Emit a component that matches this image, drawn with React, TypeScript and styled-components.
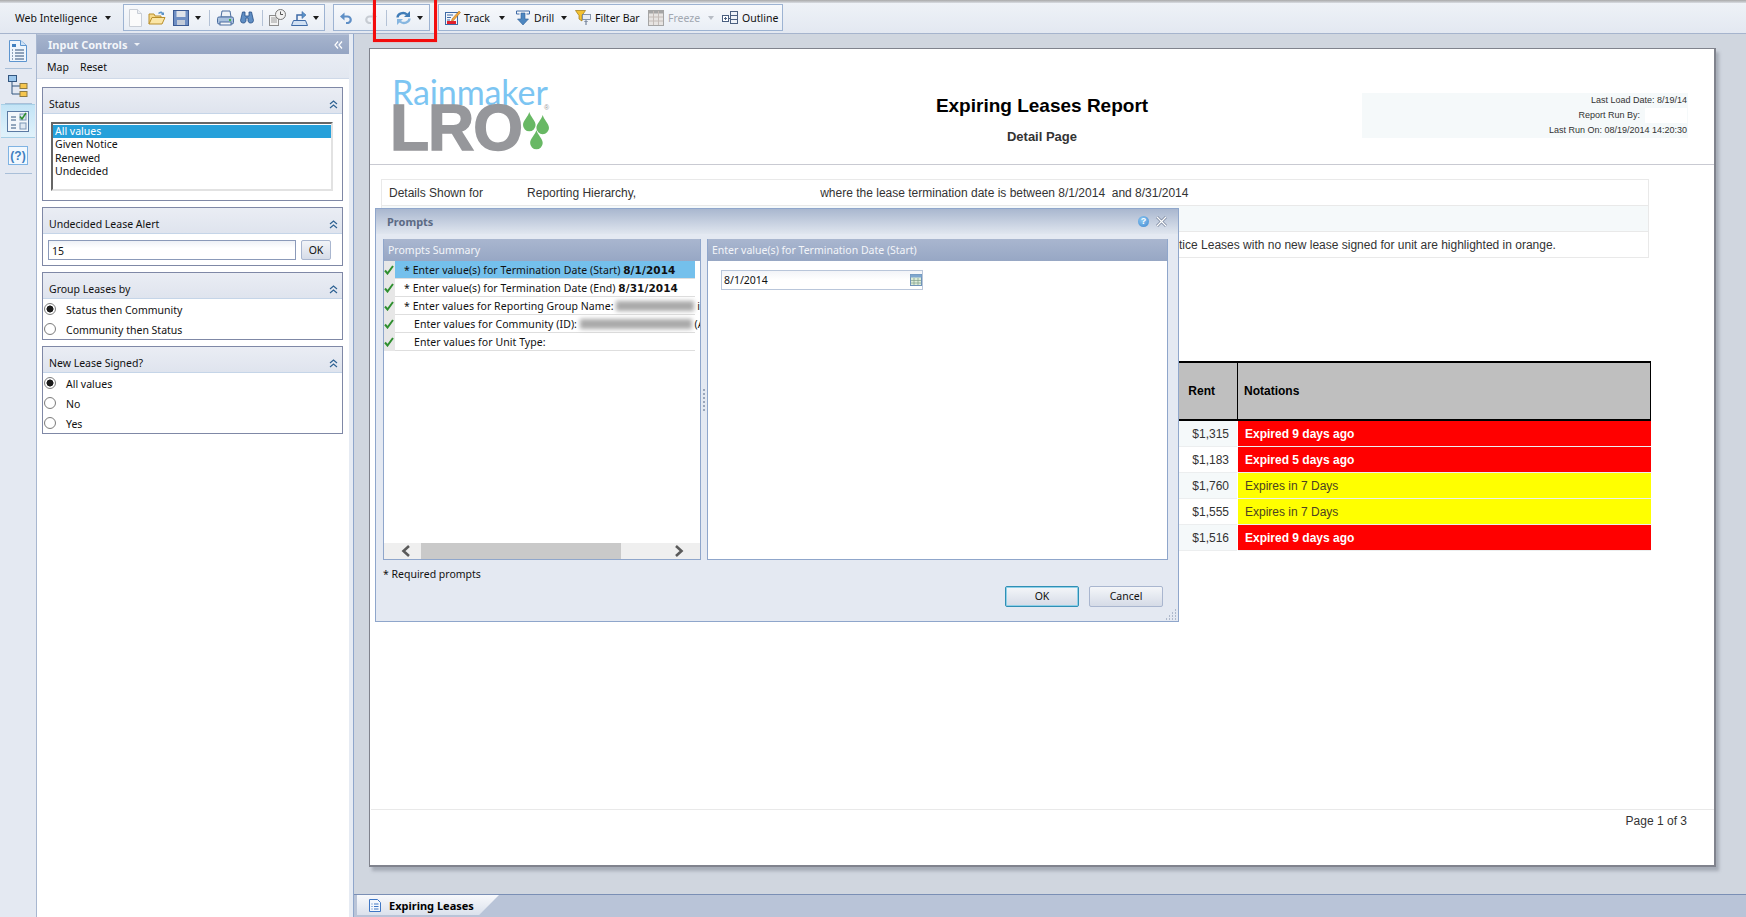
import React from 'react';
import styled, { createGlobalStyle } from 'styled-components';

const UI_FONT = `"Noto Sans", "DejaVu Sans", sans-serif`;
const REPORT_FONT = `"Liberation Sans", Arial, sans-serif`;

const GlobalStyle = createGlobalStyle`
  html, body { margin: 0; padding: 0; background: #fff; }
  * { box-sizing: border-box; }
`;

/* ---------- icons ---------- */

const DocIcon = () => (
  <svg width="15" height="18" viewBox="0 0 15 18">
    <path d="M1.500 .5h8l4 4v13h-12z" fill="#fbfbfb" stroke="#c9ced6" />
    <path d="M9.500 .5v4h4" fill="#eceff3" stroke="#c9ced6" />
  </svg>
);
const FolderIcon = () => (
  <svg width="18" height="16" viewBox="0 0 18 16">
    <path d="M1 14V4h5l1 2h6v2" fill="#f6d98a" stroke="#b98f2c" />
    <path d="M1 14l3-6.500h13L14 14z" fill="#fbe6a6" stroke="#b98f2c" />
    <path d="M10 3c2-2 4-2 5 0l1-1v3h-3l1-1c-1-1-2-1-3 0z" fill="#5b93c9" />
  </svg>
);
const SaveIcon = () => (
  <svg width="16" height="16" viewBox="0 0 16 16">
    <rect x=".5" y=".5" width="15" height="15" fill="#6f8fc4" stroke="#3b5a94" />
    <rect x="3.500" y="1" width="9" height="6" fill="#dfe3ea" />
    <rect x="4" y="10" width="8" height="5" fill="#c4ccd9" />
  </svg>
);
const PrintIcon = () => (
  <svg width="17" height="16" viewBox="0 0 17 16">
    <path d="M5 1h8l1 6H4z" fill="#eef2f7" stroke="#4a6d9f" />
    <rect x=".5" y="7" width="16" height="7" rx="1.500" fill="#a9c1de" stroke="#4a6d9f" />
    <rect x="3" y="12" width="11" height="3" fill="#f4f6f9" stroke="#4a6d9f" />
    <rect x="12" y="9" width="2" height="2" fill="#43b649" />
  </svg>
);
const BinocularIcon = () => (
  <svg width="14" height="13" viewBox="0 0 14 13">
    <path d="M2.500 1h2.500v4h4V1h2.500l2 8.500a2.800 2.800 0 0 1-5.500 .5V7H6v3a2.800 2.800 0 0 1-5.500 -.5z" fill="#5f8ec4" stroke="#274f86" strokeWidth=".8" />
  </svg>
);
const ScheduleIcon = () => (
  <svg width="17" height="17" viewBox="0 0 17 17">
    <rect x=".5" y="6.500" width="9" height="10" fill="#f3f3f3" stroke="#8c8c8c" />
    <path d="M2 9h6M2 11h6M2 13h6" stroke="#9c9c9c" />
    <circle cx="11.500" cy="5.500" r="5" fill="#f1f1f1" stroke="#777" />
    <path d="M11.500 2.500v3h2.500" fill="none" stroke="#555" />
  </svg>
);
const ExportIcon = () => (
  <svg width="17" height="16" viewBox="0 0 17 16">
    <path d="M.5 15.500l2-5h12l2 5z" fill="#d2e1f3" stroke="#3e6aa6" />
    <path d="M6 10V5h6" fill="none" stroke="#3e6aa6" strokeWidth="1.500" />
    <path d="M11 1.500l4 3.500-4 3.500z" fill="#5b93c9" stroke="#3e6aa6" strokeWidth=".6" />
  </svg>
);
const UndoIcon = ({ $off }: { $off?: boolean }) => (
  <svg width="13" height="12" viewBox="0 0 13 12" style={{ transform: $off ? 'scaleX(-1)' : undefined }}>
    <path d="M3 4.500h4.500a3 3 0 0 1 0 6.500H6" fill="none" stroke={$off ? '#c7ccd3' : '#5f8fc6'} strokeWidth="2.200" />
    <path d="M4.500 .5v8L0 4.500z" fill={$off ? '#c7ccd3' : '#5f8fc6'} />
  </svg>
);
const RefreshIcon = () => (
  <svg width="15" height="14" viewBox="0 0 15 14">
    <path d="M1.500 6.500a5.500 4.500 0 0 1 9.500-3" fill="none" stroke="#3f7cb8" strokeWidth="2.300" />
    <path d="M13.500 7.500a5.500 4.500 0 0 1-9.500 3" fill="none" stroke="#86b6e0" strokeWidth="2.300" />
    <path d="M14 0v6H8z" fill="#3f7cb8" />
    <path d="M1 14V8h6z" fill="#86b6e0" />
  </svg>
);
const TrackIcon = () => (
  <svg width="16" height="15" viewBox="0 0 16 15">
    <rect x=".5" y="2.500" width="12" height="12" fill="#f3f6fb" stroke="#3e6aa6" />
    <path d="M2 5h6M2 7.500h4M2 10h3" stroke="#3e6aa6" />
    <rect x="2" y="11" width="9" height="3" fill="#e2202c" />
    <path d="M7 9l7-8 1.500 1.500-7 8-2 .5z" fill="#f1a73c" stroke="#a5651a" strokeWidth=".5" />
  </svg>
);
const DrillIcon = () => (
  <svg width="14" height="16" viewBox="0 0 14 16">
    <path d="M.5 1h13M.5 1v3M13.500 1v3M.5 4h3M10.500 4h3" fill="none" stroke="#3e6aa6" />
    <path d="M5 3h4v6h3.500L7 15 1.500 9H5z" fill="#4c86c0" stroke="#2f5f99" strokeWidth=".6" />
  </svg>
);
const FilterIcon = () => (
  <svg width="16" height="15" viewBox="0 0 16 15">
    <path d="M.5 .5h10L7 5.500V11L4 9V5.500z" fill="#f3c232" stroke="#a8821a" strokeWidth=".8" />
    <rect x="7.500" y="4.500" width="8" height="5" fill="#e8edf4" stroke="#6d7f98" strokeWidth=".8" />
    <path d="M11 15v-4M9.500 12l1.500-1.500 1.500 1.500" fill="none" stroke="#5d6f88" />
  </svg>
);
const FreezeIcon = () => (
  <svg width="16" height="16" viewBox="0 0 16 16">
    <rect x=".5" y=".5" width="15" height="15" fill="#e7e4e2" stroke="#a5a5a5" />
    <rect x=".5" y=".5" width="15" height="3" fill="#a5a5a5" />
    <path d="M5.500 1v14M10.500 1v14M1 7h14M1 11h14" stroke="#c4bcb8" />
  </svg>
);
const OutlineIcon = () => (
  <svg width="16" height="13" viewBox="0 0 16 13">
    <rect x=".5" y="4.500" width="6" height="6" fill="#fff" stroke="#4a5f80" />
    <path d="M3.500 6v3M2 7.500h3" stroke="#4a5f80" />
    <rect x="8.500" y=".5" width="7" height="12" fill="#eef2f8" stroke="#4a5f80" />
    <path d="M8.500 4.500h7M8.500 8.500h7M6.500 7.500h2" stroke="#4a5f80" />
  </svg>
);
const CollapseIcon = () => (
  <svg width="9" height="9" viewBox="0 0 9 9">
    <path d="M1 4l3.500-3L8 4M1 8l3.500-3L8 8" fill="none" stroke="#2e6293" strokeWidth="1.200" />
  </svg>
);
const DoubleLeftIcon = () => (
  <svg width="9" height="8" viewBox="0 0 9 8">
    <path d="M4 .5L1 4l3 3.500M8 .5L5 4l3 3.500" fill="none" stroke="#fff" strokeWidth="1.200" />
  </svg>
);
const CheckIcon = () => (
  <svg width="10" height="10" viewBox="0 0 10 10">
    <path d="M1 5.500l2.500 3L9 1" fill="none" stroke="#2f8f2f" strokeWidth="2" />
  </svg>
);
const CloseIcon = () => (
  <svg width="11" height="11" viewBox="0 0 11 11">
    <path d="M1 1l9 9M10 1l-9 9" stroke="#76839b" strokeWidth="2.800" />
    <path d="M1 1l9 9M10 1l-9 9" stroke="#fff" strokeWidth="1.300" />
  </svg>
);
const ScrollChevron = ({ $dir }: { $dir: 'left' | 'right' }) => (
  <svg width="10" height="12" viewBox="0 0 10 12">
    <path d={$dir === 'left' ? 'M8 1L2.500 6 8 11' : 'M2 1l5.500 5L2 11'} fill="none" stroke="#5a5a5a" strokeWidth="2.600" />
  </svg>
);
const ReportRailIcon = () => (
  <svg width="18" height="22" viewBox="0 0 18 22">
    <path d="M.5 .5h11l6 5v16H.5z" fill="#eef5fc" stroke="#5d95cf" />
    <path d="M11.500 .5v5h6" fill="#cfe2f5" stroke="#5d95cf" />
    <path d="M3 4h4v3H3z" fill="#3f7fbf" />
    <path d="M3 10h1M6 10h9M3 13h1M6 13h9M3 16h1M6 16h9M3 19h1M6 19h9" stroke="#2f4f77" />
  </svg>
);
const TreeRailIcon = () => (
  <svg width="20" height="22" viewBox="0 0 20 22">
    <rect x=".5" y=".5" width="8" height="6" fill="#9cc7ec" stroke="#33567f" />
    <path d="M4 7v12h8M4 11h8" fill="none" stroke="#33567f" />
    <rect x="12" y="8.500" width="7" height="5" fill="#f6c64e" stroke="#8d7b45" />
    <rect x="12" y="16.500" width="7" height="5" fill="#f6c64e" stroke="#8d7b45" />
  </svg>
);
const ControlsRailIcon = () => (
  <svg width="22" height="21" viewBox="0 0 22 21">
    <rect x=".5" y=".5" width="21" height="20" fill="#f3f7fb" stroke="#5b7aa3" />
    <path d="M4 6h5M4 9h5M4 14h5M4 17h5" stroke="#33567f" />
    <rect x="13" y="3" width="6" height="6" fill="#dfe8f2" stroke="#7b95b5" />
    <path d="M13 5.500l2 2.500 4-6" fill="none" stroke="#2f8f2f" strokeWidth="1.600" />
    <rect x="13" y="12" width="6" height="6" fill="#dfe8f2" stroke="#7b95b5" />
  </svg>
);
const HelpRailIcon = () => (
  <svg width="20" height="19" viewBox="0 0 20 19">
    <rect x=".5" y=".5" width="19" height="18" fill="#f2f8fe" stroke="#7fb3e3" />
    <text x="10" y="14" textAnchor="middle" fontSize="12" fontFamily={REPORT_FONT} fontWeight="700" fill="#3f7fbf">(?)</text>
  </svg>
);
const SheetTabIcon = () => (
  <svg width="12" height="13" viewBox="0 0 12 13">
    <path d="M.5 .5h8l3 3v9H.5z" fill="#f4f8fd" stroke="#3f76c4" />
    <path d="M2.500 5h1M5 5h4.500M2.500 7.500h1M5 7.500h4.500M2.500 10h1M5 10h4.500" stroke="#3f76c4" />
  </svg>
);
const CalendarIcon = () => (
  <svg width="12" height="12" viewBox="0 0 12 12">
    <rect x=".5" y=".5" width="11" height="11" fill="#dcebd8" stroke="#6f93b8" />
    <rect x=".5" y=".5" width="11" height="3" fill="#7fa7cf" />
    <path d="M4 4v7M8 4v7M1 6.500h10M1 9h10" stroke="#7f9d8a" strokeWidth=".7" />
  </svg>
);
const Drop = ({ $x, $y }: { $x: number; $y: number }) => (
  <path transform={`translate(${$x} ${$y})`} d="M7.500 0C9 6 15 10 15 15.500a7.500 7.500 0 0 1-15 0C0 10 6 6 7.500 0z" fill="#68b864" />
);

/* ---------- page shell ---------- */

const Page = styled.div`
  position: relative;
  width: 1746px;
  height: 917px;
  overflow: hidden;
  display: flex;
  flex-direction: column;
  font-family: ${UI_FONT};
  font-size: 10.5px;
  color: #111;
  background: #e4e9f2;
`;

const TopEdge = styled.div`
  height: 3px;
  background: linear-gradient(#a9a9a9, #d8dce2);
`;

const Toolbar = styled.div`
  height: 31px;
  display: flex;
  align-items: flex-start;
  padding-top: 1px;
  background: linear-gradient(#eef2f7, #e3e8f1);
  border-bottom: 1px solid #a6b4cd;
`;

const AppMenu = styled.div`
  width: 123px;
  height: 27px;
  display: flex;
  align-items: center;
  padding-left: 15px;
  gap: 8px;
`;

const ToolGroup = styled.div<{ $width: number; $gap?: number }>`
  width: ${(p) => p.$width}px;
  height: 27px;
  margin-right: ${(p) => p.$gap ?? 0}px;
  display: flex;
  align-items: center;
  border: 1px solid #9db3d2;
  background: linear-gradient(#f7f9fc, #e9eef5);
`;

const Slot = styled.div<{ $width: number }>`
  width: ${(p) => p.$width}px;
  flex: none;
  display: flex;
  align-items: center;
  justify-content: center;
`;

const ToolLabel = styled.span<{ $off?: boolean; $width: number; $lead?: number }>`
  width: ${(p) => p.$width}px;
  flex: none;
  margin-left: ${(p) => p.$lead ?? 4}px;
  white-space: nowrap;
  color: ${(p) => (p.$off ? '#a2a8b1' : '#111')};
`;

const Caret = styled.i<{ $off?: boolean }>`
  display: block;
  width: 0;
  height: 0;
  border-left: 3.5px solid transparent;
  border-right: 3.5px solid transparent;
  border-top: 4px solid ${(p) => (p.$off ? '#b8bdc5' : '#1c1c1c')};
`;

const ToolSep = styled.i`
  display: block;
  width: 1px;
  height: 16px;
  background: #b4c2d6;
`;

const RedMark = styled.div`
  position: absolute;
  left: 373px;
  top: 0;
  width: 64px;
  height: 42px;
  border: 3px solid #f30c0c;
  border-top: none;
  box-shadow: 0 0 1px #f77;
`;

const Main = styled.div`
  flex: 1;
  min-height: 0;
  display: flex;
`;

/* ---------- left rail ---------- */

const Rail = styled.nav`
  width: 37px;
  flex: none;
  display: flex;
  flex-direction: column;
  align-items: center;
  padding-top: 4px;
  background: #e4e9f2;
  border-right: 1px solid #a8b7d0;
`;

const RailItem = styled.div<{ $active?: boolean; $height: number; $top?: number }>`
  width: 34px;
  height: ${(p) => p.$height}px;
  margin-top: ${(p) => p.$top ?? 0}px;
  flex: none;
  display: flex;
  align-items: center;
  justify-content: center;
  background: ${(p) => (p.$active ? 'linear-gradient(#c3e4f6, #e1f2fb)' : 'transparent')};
  border-top: ${(p) => (p.$active ? '1px solid #a6cfe6' : 'none')};
  border-bottom: ${(p) => (p.$active ? '1px solid #a6cfe6' : 'none')};
`;

const RailLine = styled.i<{ $before: number; $after: number }>`
  display: block;
  width: 27px;
  height: 1px;
  flex: none;
  margin: ${(p) => p.$before}px 0 ${(p) => p.$after}px;
  background: #a9bfd8;
`;

/* ---------- input controls panel ---------- */

const Side = styled.aside`
  width: 312px;
  flex: none;
  display: flex;
  flex-direction: column;
  background: #fff;
`;

const SideHead = styled.div`
  height: 20px;
  flex: none;
  display: flex;
  align-items: center;
  gap: 7px;
  padding: 0 6px 0 11px;
  background: linear-gradient(#a6b4cd, #95a5c3);
  color: #f4f6fa;
  font-size: 11px;
  font-weight: 700;
  border-top: 1px solid #b9c4d8;
`;

const WhiteCaret = styled.i`
  width: 0;
  height: 0;
  border-left: 3px solid transparent;
  border-right: 3px solid transparent;
  border-top: 3px solid #eef1f6;
`;

const SideHeadEnd = styled.span`
  margin-left: auto;
  display: flex;
`;

const SideMenu = styled.div`
  height: 25px;
  flex: none;
  display: flex;
  align-items: center;
  gap: 11px;
  padding: 2px 0 0 10px;
  background: linear-gradient(#e9edf4, #e2e7f0);
  border-bottom: 1px solid #cfd9e8;
`;

const ControlList = styled.div`
  display: flex;
  flex-direction: column;
  gap: 6px;
  padding: 8px 6px 0 5px;
`;

const ControlBox = styled.section<{ $height: number }>`
  height: ${(p) => p.$height}px;
  border: 1px solid #7f88a6;
  overflow: hidden;
`;

const ControlHead = styled.header`
  height: 26px;
  display: flex;
  align-items: center;
  justify-content: space-between;
  padding: 7px 4px 0 6px;
  background: linear-gradient(#eaedf4, #dfe4ee);
  border-bottom: 1px solid #c5d5e8;
`;

const ListBox = styled.div`
  height: 69px;
  margin: 8px 9px 0 8px;
  padding-top: 1px;
  background: #fff;
  border-style: solid;
  border-width: 2px;
  border-color: #666 #e2e2e2 #e2e2e2 #666;
`;

const ListOption = styled.div<{ $selected?: boolean }>`
  height: 13.4px;
  line-height: 13px;
  padding-left: 2px;
  background: ${(p) => (p.$selected ? '#26a0da' : 'transparent')};
  color: ${(p) => (p.$selected ? '#fff' : '#111')};
`;

const AlertRow = styled.div`
  display: flex;
  align-items: center;
  gap: 5px;
  padding: 6px 0 0 5px;
`;

const AlertInput = styled.div`
  width: 248px;
  height: 20px;
  padding-left: 3px;
  line-height: 20px;
  border: 1px solid #8b9ab9;
  background: linear-gradient(#eef1f6, #fff 40%);
`;

const SmallButton = styled.div`
  width: 30px;
  height: 20px;
  line-height: 18px;
  text-align: center;
  border: 1px solid #a9b6cf;
  border-radius: 2px;
  background: linear-gradient(#f2f4f8, #d6dce8);
`;

const RadioRow = styled.div`
  height: 20px;
  display: flex;
  align-items: center;
  gap: 10px;
  padding: 2px 0 0 1px;
`;

const Radio = styled.i<{ $checked?: boolean }>`
  width: 12px;
  height: 12px;
  flex: none;
  margin-top: -3px;
  border-radius: 50%;
  border: 1px solid #7d7d7d;
  background: radial-gradient(circle, ${(p) => (p.$checked ? '#1a1a1a 0 3.2px, #fff 3.8px' : '#fff 0 4px, #f1f1f1 6px')});
`;

/* ---------- workspace + report ---------- */

const Strip = styled.div`
  width: 5px;
  flex: none;
  background: #e6ebf3;
  border-right: 1px solid #8fa6cb;
`;

const Workspace = styled.main`
  position: relative;
  flex: 1;
  min-width: 0;
  display: flex;
  flex-direction: column;
  background: #d0d6df;
`;

const ReportWrap = styled.div`
  flex: 1;
  min-height: 0;
  padding: 14px 30px 0 15px;
`;

const Report = styled.article`
  height: 819px;
  display: flex;
  flex-direction: column;
  background: #fff;
  border: 1px solid #80838d;
  border-width: 1px 2px 2px 1px;
  box-shadow: 3px 4px 3px rgba(90, 95, 110, 0.35);
  font-family: ${REPORT_FONT};
  color: #333;
`;

const ReportHead = styled.header`
  height: 116px;
  flex: none;
  display: grid;
  grid-template-columns: 1fr auto 1fr;
  border-bottom: 1px solid #c9cad2;
`;

const Logo = styled.div`
  position: relative;
  width: 170px;
  margin: 29px 0 0 24px;
`;

const LogoTop = styled.div`
  margin-left: -2px;
  font-family: Lato, "Open Sans", sans-serif;
  font-weight: 400;
  font-size: 34px;
  line-height: 27px;
  letter-spacing: -0.1px;
  color: #7cc5f2;
`;

const LogoBottom = styled.div`
  margin-left: -4px;
  font-family: ${REPORT_FONT};
  font-weight: 700;
  font-size: 64px;
  line-height: 46px;
  letter-spacing: -1px;
  color: #96979b;
  -webkit-text-stroke: 1.5px #96979b;
`;

const LogoDrops = styled.svg`
  position: absolute;
  left: 129px;
  top: 34px;
`;

const LogoMark = styled.span`
  position: absolute;
  left: 150px;
  top: 25px;
  font-size: 7px;
  line-height: 10px;
  color: #96979b;
`;

const TitleBlock = styled.div`
  padding-top: 46px;
  text-align: center;
  color: #000;
  font-weight: 700;
`;

const ReportTitle = styled.h1`
  margin: 0;
  font-size: 19px;
  line-height: 22px;
  font-weight: 700;
`;

const ReportSub = styled.div`
  margin-top: 12px;
  font-size: 13px;
  line-height: 16px;
  color: #333;
`;

const InfoBox = styled.div`
  justify-self: end;
  width: 326px;
  height: 45px;
  margin: 44px 26px 0 0;
  padding-right: 1px;
  background: #f5f9fa;
  font-size: 9px;
  line-height: 15px;
  text-align: right;
`;

const Masked = styled.span`
  display: inline-block;
  width: 42px;
  height: 15px;
  margin-left: 5px;
  vertical-align: top;
  background: #fff;
`;

const DetailTable = styled.div`
  height: 79px;
  margin: 14px 65px 0 11px;
  display: flex;
  flex-direction: column;
  border: 1px solid #e9e9e9;
`;

const DetailRow = styled.div<{ $tinted?: boolean }>`
  flex: 1;
  display: flex;
  align-items: center;
  font-size: 12px;
  white-space: nowrap;
  background: ${(p) => (p.$tinted ? '#f5f9fa' : '#fff')};
  & + & {
    border-top: 1px solid #e9e9e9;
  }
`;

const DetailPart = styled.span<{ $left: number }>`
  margin-left: ${(p) => p.$left}px;
`;

const DataTable = styled.div`
  align-self: flex-end;
  width: 560px;
  margin: 103px 63px 0 0;
  display: grid;
  grid-template-columns: 1fr 414px;
  font-size: 12px;
`;

const HeadCell = styled.div<{ $first?: boolean }>`
  height: 60px;
  display: flex;
  align-items: center;
  padding-left: 6px;
  justify-content: ${(p) => (p.$first ? 'flex-end' : 'flex-start')};
  padding-right: ${(p) => (p.$first ? '22px' : '0')};
  background: #bfbfbf;
  color: #000;
  font-weight: 700;
  border: 1px solid #000;
  border-width: 2px ${(p) => (p.$first ? 0 : 1)}px 2px ${(p) => (p.$first ? 0 : 1)}px;
`;

const RentCell = styled.div<{ $tinted?: boolean }>`
  height: 26px;
  line-height: 27px;
  padding-right: 8px;
  text-align: right;
  background: ${(p) => (p.$tinted ? '#f5f9fa' : '#fff')};
  border-bottom: 1px solid #eceeef;
`;

const NoteCell = styled.div<{ $tone: 'red' | 'yellow' }>`
  height: 26px;
  line-height: 27px;
  padding-left: 7px;
  margin-left: 1px;
  background: ${(p) => (p.$tone === 'red' ? '#ff0000' : '#ffff00')};
  color: ${(p) => (p.$tone === 'red' ? '#fff' : '#4c4222')};
  font-weight: ${(p) => (p.$tone === 'red' ? 700 : 400)};
  border-bottom: 1px solid #eceeef;
`;

const ReportFoot = styled.footer`
  margin-top: auto;
  height: 56px;
  flex: none;
  padding: 4px 27px 0 0;
  margin-left: 1px;
  border-top: 1px solid #e9e9e9;
  text-align: right;
  font-size: 12px;
  line-height: 14px;
`;

/* ---------- sheet tabs ---------- */

const TabBar = styled.div`
  height: 23px;
  flex: none;
  padding-left: 3px;
  background: #b9c4d8;
  border-top: 1px solid #7a8fb5;
`;

const SheetTab = styled.div`
  width: 142px;
  height: 20px;
  display: flex;
  align-items: center;
  gap: 8px;
  padding-left: 12px;
  background: linear-gradient(#f8f9fc, #dbe1ec);
  clip-path: polygon(0 0, 100% 0, 86% 100%, 0 100%);
  font-size: 11px;
  font-weight: 700;
  color: #000;
`;

/* ---------- prompts dialog ---------- */

const Dialog = styled.div`
  position: absolute;
  left: 21px;
  top: 174px;
  width: 804px;
  height: 414px;
  display: flex;
  flex-direction: column;
  background: #e4e9f2;
  border: 1px solid #8fa6cb;
`;

const DialogHead = styled.header`
  height: 25px;
  flex: none;
  display: flex;
  align-items: center;
  padding: 0 11px 0 11px;
  background: linear-gradient(#a9b7cf, #e0e6ef);
  font-size: 11px;
  font-weight: 700;
  color: #5c6a84;
`;

const HelpDot = styled.span`
  width: 11px;
  height: 11px;
  margin-left: auto;
  border-radius: 50%;
  background: radial-gradient(circle at 40% 35%, #8cc8f2, #3f87d0);
  color: #fff;
  font: 700 9px/11px ${REPORT_FONT};
  text-align: center;
`;

const CloseSlot = styled.span`
  margin-left: 7px;
  display: flex;
`;

const PanelRow = styled.div`
  height: 321px;
  flex: none;
  display: flex;
  margin: 5px 10px 0 7px;
`;

const PromptPanel = styled.section<{ $width: number }>`
  width: ${(p) => p.$width}px;
  flex: none;
  display: flex;
  flex-direction: column;
  background: #fff;
  border: 1px solid #8fa6cb;
  border-top: none;
`;

const PanelHead = styled.header`
  height: 22px;
  flex: none;
  display: flex;
  align-items: center;
  padding-left: 4px;
  background: linear-gradient(#a9b6cf, #97a7c4);
  color: #f3f5f9;
  white-space: nowrap;
  overflow: hidden;
`;

const Splitter = styled.div`
  width: 6px;
  flex: none;
  display: flex;
  flex-direction: column;
  justify-content: center;
  align-items: center;
  gap: 2px;
`;

const SplitDot = styled.i`
  width: 2px;
  height: 2px;
  background: #9aa6bb;
`;

const PromptList = styled.div`
  flex: 1;
  min-height: 0;
  overflow: hidden;
`;

const PromptRow = styled.div`
  height: 18px;
  display: flex;
  padding-right: 5px;
`;

const CheckCell = styled.div`
  width: 11px;
  flex: none;
  display: flex;
  align-items: center;
  padding-left: 0;
  background: #e7e7e7;
`;

const PromptText = styled.div<{ $active?: boolean; $plain?: boolean }>`
  flex: 1;
  min-width: 0;
  white-space: nowrap;
  padding-top: 1px;
  line-height: 16px;
  letter-spacing: 0.07px;
  padding-left: ${(p) => (p.$plain ? 19 : 9)}px;
  background: ${(p) => (p.$active ? '#74c0ec' : '#fff')};
  border-bottom: 1px solid #dedede;
`;

const PromptValue = styled.b`
  font-family: "DejaVu Sans", sans-serif;
  font-size: 10.500px;
  letter-spacing: 0.1px;
  font-weight: 700;
`;

const Blurred = styled.span<{ $width: number }>`
  display: inline-block;
  width: ${(p) => p.$width}px;
  height: 10px;
  vertical-align: -1px;
  background: #aaa;
  filter: blur(2px);
`;

const ScrollBar = styled.div`
  height: 16px;
  flex: none;
  display: flex;
  align-items: center;
  background: #efefef;
`;

const ScrollStart = styled.span`
  width: 37px;
  flex: none;
  display: flex;
  padding-left: 17px;
`;

const ScrollThumb = styled.div`
  width: 200px;
  height: 16px;
  flex: none;
  background: #c9c9c9;
`;

const ScrollEnd = styled.span`
  margin: 0 16px 0 auto;
  display: flex;
`;

const DateField = styled.div`
  width: 202px;
  height: 20px;
  margin: 9px 0 0 13px;
  display: flex;
  align-items: center;
  justify-content: space-between;
  padding: 0 0 0 2px;
  border: 1px solid #b9c6da;
  background: linear-gradient(#f2f4f8, #fff 50%);
`;

const RequiredNote = styled.div`
  margin: 7px 0 0 7px;
  height: 15px;
  line-height: 15px;
`;

const DialogActions = styled.div`
  display: flex;
  justify-content: flex-end;
  gap: 10px;
  margin: 4px 15px 0 0;
`;

const DialogButton = styled.div<{ $focused?: boolean }>`
  width: 74px;
  height: 21px;
  line-height: 19px;
  text-align: center;
  border: 1px solid ${(p) => (p.$focused ? '#2f8fb5' : '#a9b6cf')};
  box-shadow: ${(p) => (p.$focused ? 'inset 0 0 0 1px #8fd0e8' : 'none')};
  border-radius: 2px;
  background: linear-gradient(#f4f6f9, #d5dbe7);
`;

const ResizeGrip = styled.svg`
  position: absolute;
  right: 1px;
  bottom: 1px;
`;

const rents = [
  { rent: '$1,315', note: 'Expired 9 days ago', tone: 'red' as const },
  { rent: '$1,183', note: 'Expired 5 days ago', tone: 'red' as const },
  { rent: '$1,760', note: 'Expires in 7 Days', tone: 'yellow' as const },
  { rent: '$1,555', note: 'Expires in 7 Days', tone: 'yellow' as const },
  { rent: '$1,516', note: 'Expired 9 days ago', tone: 'red' as const },
];

export default function App() {
  return (
    <Page>
      <GlobalStyle />
      <TopEdge />
      <Toolbar>
        <AppMenu>
          <span>Web Intelligence</span>
          <Caret />
        </AppMenu>
        <ToolGroup $width={202} $gap={8}>
          <Slot $width={22}><DocIcon /></Slot>
          <Slot $width={22}><FolderIcon /></Slot>
          <Slot $width={26}><SaveIcon /></Slot>
          <Slot $width={8}><Caret /></Slot>
          <Slot $width={14}><ToolSep /></Slot>
          <Slot $width={18}><PrintIcon /></Slot>
          <Slot $width={26}><BinocularIcon /></Slot>
          <Slot $width={4}><ToolSep /></Slot>
          <Slot $width={26}><ScheduleIcon /></Slot>
          <Slot $width={18}><ExportIcon /></Slot>
          <Slot $width={16}><Caret /></Slot>
        </ToolGroup>
        <ToolGroup $width={97} $gap={8}>
          <Slot $width={24}><UndoIcon /></Slot>
          <Slot $width={24}><UndoIcon $off /></Slot>
          <Slot $width={8}><ToolSep /></Slot>
          <Slot $width={26}><RefreshIcon /></Slot>
          <Slot $width={8}><Caret /></Slot>
        </ToolGroup>
        <ToolGroup $width={345}>
          <Slot $width={6} />
          <Slot $width={16}><TrackIcon /></Slot>
          <ToolLabel $width={27} $lead={3}>Track</ToolLabel>
          <Slot $width={22}><Caret /></Slot>
          <Slot $width={20}><DrillIcon /></Slot>
          <ToolLabel $width={19} $lead={1}>Drill</ToolLabel>
          <Slot $width={22}><Caret /></Slot>
          <Slot $width={16}><FilterIcon /></Slot>
          <ToolLabel $width={44}>Filter Bar</ToolLabel>
          <Slot $width={9} />
          <Slot $width={16}><FreezeIcon /></Slot>
          <ToolLabel $width={32} $off>Freeze</ToolLabel>
          <Slot $width={22}><Caret $off /></Slot>
          <Slot $width={16}><OutlineIcon /></Slot>
          <ToolLabel $width={34}>Outline</ToolLabel>
        </ToolGroup>
      </Toolbar>

      <Main>
        <Rail>
          <RailItem $height={26}><ReportRailIcon /></RailItem>
          <RailLine $before={4} $after={3} />
          <RailItem $height={28}><TreeRailIcon /></RailItem>
          <RailLine $before={3} $after={0} />
          <RailItem $active $height={34}><ControlsRailIcon /></RailItem>
          <RailItem $height={28} $top={3}><HelpRailIcon /></RailItem>
          <RailLine $before={4} $after={0} />
        </Rail>

        <Side>
          <SideHead>
            <span>Input Controls</span>
            <WhiteCaret />
            <SideHeadEnd><DoubleLeftIcon /></SideHeadEnd>
          </SideHead>
          <SideMenu>
            <span>Map</span>
            <span>Reset</span>
          </SideMenu>
          <ControlList>
            <ControlBox $height={114}>
              <ControlHead>Status<CollapseIcon /></ControlHead>
              <ListBox>
                <ListOption $selected>All values</ListOption>
                <ListOption>Given Notice</ListOption>
                <ListOption>Renewed</ListOption>
                <ListOption>Undecided</ListOption>
              </ListBox>
            </ControlBox>
            <ControlBox $height={59}>
              <ControlHead>Undecided Lease Alert<CollapseIcon /></ControlHead>
              <AlertRow>
                <AlertInput>15</AlertInput>
                <SmallButton>OK</SmallButton>
              </AlertRow>
            </ControlBox>
            <ControlBox $height={68}>
              <ControlHead>Group Leases by<CollapseIcon /></ControlHead>
              <RadioRow><Radio $checked />Status then Community</RadioRow>
              <RadioRow><Radio />Community then Status</RadioRow>
            </ControlBox>
            <ControlBox $height={88}>
              <ControlHead>New Lease Signed?<CollapseIcon /></ControlHead>
              <RadioRow><Radio $checked />All values</RadioRow>
              <RadioRow><Radio />No</RadioRow>
              <RadioRow><Radio />Yes</RadioRow>
            </ControlBox>
          </ControlList>
        </Side>

        <Strip />

        <Workspace>
          <ReportWrap>
            <Report>
              <ReportHead>
                <Logo>
                  <LogoTop>Rainmaker</LogoTop>
                  <LogoBottom>LRO</LogoBottom>
                  <LogoMark>®</LogoMark>
                  <LogoDrops width="26" height="37.700" viewBox="0 0 31 45">
                    <Drop $x={0} $y={0} />
                    <Drop $x={16} $y={3.5} />
                    <Drop $x={8.5} $y={21.5} />
                  </LogoDrops>
                </Logo>
                <TitleBlock>
                  <ReportTitle>Expiring Leases Report</ReportTitle>
                  <ReportSub>Detail Page</ReportSub>
                </TitleBlock>
                <InfoBox>
                  <div>Last Load Date: 8/19/14</div>
                  <div>Report Run By:<Masked /></div>
                  <div>Last Run On: 08/19/2014 14:20:30</div>
                </InfoBox>
              </ReportHead>

              <DetailTable>
                <DetailRow>
                  <DetailPart $left={7}>Details Shown for</DetailPart>
                  <DetailPart $left={44}>Reporting Hierarchy,</DetailPart>
                  <DetailPart $left={184}>where the lease termination date is between 8/1/2014&nbsp; and 8/31/2014</DetailPart>
                </DetailRow>
                <DetailRow $tinted />
                <DetailRow>
                  <DetailPart $left={747}>Given Notice Leases with no new lease signed for unit are highlighted in orange.</DetailPart>
                </DetailRow>
              </DetailTable>

              <DataTable>
                <HeadCell $first>Rent</HeadCell>
                <HeadCell>Notations</HeadCell>
                {rents.map((row, i) => (
                  <React.Fragment key={i}>
                    <RentCell $tinted={i % 2 === 0}>{row.rent}</RentCell>
                    <NoteCell $tone={row.tone}>{row.note}</NoteCell>
                  </React.Fragment>
                ))}
              </DataTable>

              <ReportFoot>Page 1 of 3</ReportFoot>
            </Report>
          </ReportWrap>

          <TabBar>
            <SheetTab>
              <SheetTabIcon />
              <span>Expiring Leases</span>
            </SheetTab>
          </TabBar>

          <Dialog>
            <DialogHead>
              <span>Prompts</span>
              <HelpDot>?</HelpDot>
              <CloseSlot><CloseIcon /></CloseSlot>
            </DialogHead>
            <PanelRow>
              <PromptPanel $width={318}>
                <PanelHead>Prompts Summary</PanelHead>
                <PromptList>
                  <PromptRow>
                    <CheckCell><CheckIcon /></CheckCell>
                    <PromptText $active>* Enter value(s) for Termination Date (Start) <PromptValue>8/1/2014</PromptValue></PromptText>
                  </PromptRow>
                  <PromptRow>
                    <CheckCell><CheckIcon /></CheckCell>
                    <PromptText>* Enter value(s) for Termination Date (End) <PromptValue>8/31/2014</PromptValue></PromptText>
                  </PromptRow>
                  <PromptRow>
                    <CheckCell><CheckIcon /></CheckCell>
                    <PromptText>* Enter values for Reporting Group Name: <Blurred $width={78} /> ir</PromptText>
                  </PromptRow>
                  <PromptRow>
                    <CheckCell><CheckIcon /></CheckCell>
                    <PromptText $plain>Enter values for Community (ID): <Blurred $width={112} /> (A</PromptText>
                  </PromptRow>
                  <PromptRow>
                    <CheckCell><CheckIcon /></CheckCell>
                    <PromptText $plain>Enter values for Unit Type:</PromptText>
                  </PromptRow>
                </PromptList>
                <ScrollBar>
                  <ScrollStart><ScrollChevron $dir="left" /></ScrollStart>
                  <ScrollThumb />
                  <ScrollEnd><ScrollChevron $dir="right" /></ScrollEnd>
                </ScrollBar>
              </PromptPanel>
              <Splitter>
                {[0, 1, 2, 3, 4, 5].map((d) => <SplitDot key={d} />)}
              </Splitter>
              <PromptPanel $width={461}>
                <PanelHead>Enter value(s) for Termination Date (Start)</PanelHead>
                <DateField>
                  <span>8/1/2014</span>
                  <CalendarIcon />
                </DateField>
              </PromptPanel>
            </PanelRow>
            <RequiredNote>* Required prompts</RequiredNote>
            <DialogActions>
              <DialogButton $focused>OK</DialogButton>
              <DialogButton>Cancel</DialogButton>
            </DialogActions>
            <ResizeGrip width="11" height="11" viewBox="0 0 11 11">
              <path d="M9 1h1M6 4h1M9 4h1M3 7h1M6 7h1M9 7h1M0 10h1M3 10h1M6 10h1M9 10h1" stroke="#7a8aa6" />
            </ResizeGrip>
          </Dialog>
        </Workspace>
      </Main>
      <RedMark />
    </Page>
  );
}
